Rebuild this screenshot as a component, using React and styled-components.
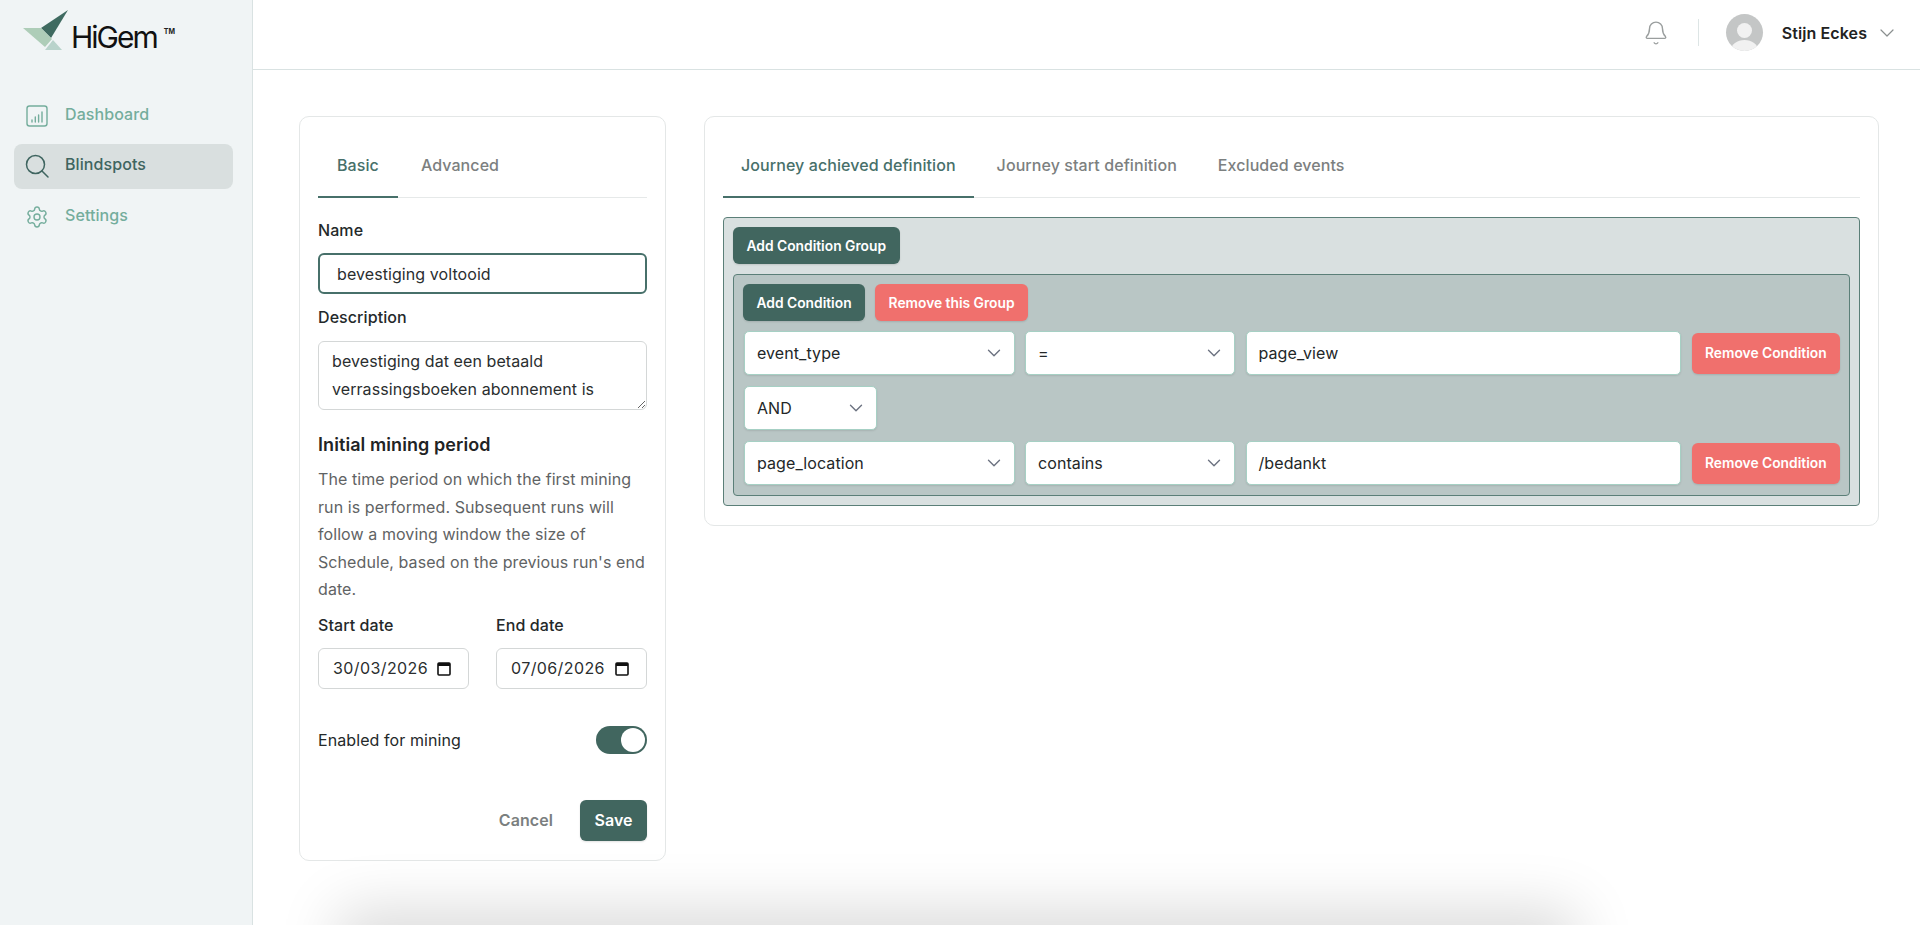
import React from "react";
import styled, { createGlobalStyle } from "styled-components";
import { ChevronDown, Bell, Settings } from "lucide-react";

const GlobalStyle = createGlobalStyle`
  html, body {
    margin: 0;
    padding: 0;
    height: 100%;
    overflow: hidden;
    background: #fff;
  }
  * {
    box-sizing: border-box;
  }
  body {
    font-family: Inter, "Liberation Sans", sans-serif;
    letter-spacing: 0.08px;
    color: #1f2425;
  }
`;

const Page = styled.div`
  display: flex;
  width: 1920px;
  height: 925px;
  overflow: hidden;
`;

// left navigation
const Sidebar = styled.aside`
  width: 253px;
  flex-shrink: 0;
  background: #f0f4f5;
  border-right: 1px solid #d9e2e2;
  padding: 10px 19px 0 14px;
`;
const Logo = styled.div`
  display: flex;
  align-items: flex-start;
  height: 83px;
  margin-left: 8px;
`;
const LogoName = styled.span`
  font-size: 30px;
  font-weight: 400;
  letter-spacing: -2px;
  line-height: 30px;
  color: #111;
  margin: 12px 0 0 1px;
`;
const LogoMark = styled.span`
  font-size: 7px;
  font-weight: 700;
  letter-spacing: 0;
  line-height: 7px;
  color: #222;
  margin: 18px 0 0 7px;
`;
const NavItem = styled.div`
  display: flex;
  align-items: center;
  gap: 16px;
  height: 45px;
  padding: 0 11px;
  margin-bottom: 5.5px;
  border-radius: 8px;
  font-size: 16px;
  font-weight: 500;
  color: ${(p) => (p.$active ? "#3f6560" : "#74ad9c")};
  background: ${(p) => (p.$active ? "#d9dfdf" : "transparent")};
  & > svg {
    flex-shrink: 0;
  }
`;
const NavLabel = styled.span`
  padding-bottom: 4px;
`;

const Main = styled.div`
  position: relative;
  flex: 1;
  min-width: 0;
  overflow: hidden;
`;
const Header = styled.header`
  height: 70px;
  display: flex;
  align-items: center;
  justify-content: flex-end;
  padding: 0 21px 4px 0;
  border-bottom: 1px solid #d9e2e2;
`;
const Divider = styled.div`
  width: 1px;
  height: 27px;
  background: #dde5e5;
  margin: 0 27px 0 29px;
`;
const Avatar = styled.div`
  position: relative;
  width: 37px;
  height: 37px;
  border-radius: 50%;
  background: #c4c6c6;
  overflow: hidden;
  &::before {
    content: "";
    position: absolute;
    left: 11px;
    top: 9px;
    width: 15px;
    height: 15px;
    border-radius: 50%;
    background: #f1f1f1;
  }
  &::after {
    content: "";
    position: absolute;
    left: 5px;
    top: 26px;
    width: 27px;
    height: 20px;
    border-radius: 50%;
    background: #f1f1f1;
  }
`;
const UserName = styled.span`
  font-size: 16px;
  font-weight: 600;
  color: #222;
  margin: 0 8px 0 19px;
`;

const Content = styled.div`
  display: flex;
  align-items: flex-start;
  gap: 38px;
  padding: 46px 42px 0 46px;
`;
const Card = styled.section`
  background: #fff;
  border: 1px solid #e4e7e7;
  border-radius: 10px;
  padding: 0 18px;
`;
const SettingsCard = styled(Card)`
  width: 367px;
  height: 745px;
  flex-shrink: 0;
`;
const DefinitionCard = styled(Card)`
  flex: 1;
  height: 410px;
`;

const Tabs = styled.div`
  display: flex;
  height: 81px;
  border-bottom: 1px solid #e6e9e9;
`;
const Tab = styled.div`
  display: flex;
  align-items: center;
  height: 81px;
  padding: 16px ${(p) => p.$pad || 18}px 0;
  font-size: 16px;
  font-weight: 500;
  white-space: nowrap;
  color: ${(p) => (p.$active ? "#47706a" : "#7c8080")};
  border-bottom: 2px solid ${(p) => (p.$active ? "#47706a" : "transparent")};
  margin-right: ${(p) => p.$gap}px;
`;

const FieldLabel = styled.div`
  font-size: 16px;
  font-weight: 500;
  line-height: 20px;
  color: #24292a;
`;
const NameLabel = styled(FieldLabel)`
  margin: 22px 0 13px;
`;
const DescriptionLabel = styled(FieldLabel)`
  margin: 13px 0 14px;
`;
const NameInput = styled.input`
  display: block;
  width: 100%;
  height: 41px;
  border: 2px solid #47706a;
  border-radius: 6px;
  outline: none;
  padding: 0 17px;
  font: 400 16px Inter, sans-serif;
  letter-spacing: 0.08px;
  color: #2a2e2f;
  background: #fff;
`;
const Description = styled.textarea`
  display: block;
  width: 100%;
  height: 69px;
  border: 1px solid #d4d7d7;
  border-radius: 6px;
  outline: none;
  padding: 6px 13px;
  font: 400 16px/27.6px Inter, sans-serif;
  letter-spacing: 0.08px;
  color: #2a2e2f;
  background: #fff;
  overflow: hidden;
`;
const SectionTitle = styled.h3`
  margin: 23px 0 9px;
  font-size: 18px;
  font-weight: 600;
  line-height: 24px;
  color: #1f2425;
`;
const Help = styled.p`
  margin: 0;
  font-size: 16px;
  line-height: 27.6px;
  color: #5f6364;
`;
const DateGrid = styled.div`
  display: grid;
  grid-template-columns: 151px 151px;
  justify-content: space-between;
  margin-top: 11px;
`;
const DateLabel = styled(FieldLabel)`
  margin-bottom: 13px;
`;
const DateBox = styled.div`
  display: flex;
  align-items: center;
  justify-content: space-between;
  height: 41px;
  padding: 0 17px 0 14px;
  border: 1px solid #d4d7d7;
  border-radius: 6px;
  font-size: 16px;
  letter-spacing: 0.4px;
  color: #2a2e2f;
`;
const ToggleRow = styled.div`
  display: flex;
  align-items: center;
  justify-content: space-between;
  height: 28px;
  margin-top: 37px;
  font-size: 16px;
  color: #24292a;
`;
const Toggle = styled.div`
  display: flex;
  align-items: center;
  justify-content: flex-end;
  width: 51px;
  height: 28px;
  padding: 2px;
  border-radius: 14px;
  background: #41665f;
  &::after {
    content: "";
    width: 24px;
    height: 24px;
    border-radius: 50%;
    background: #fff;
  }
`;
const FormActions = styled.div`
  display: flex;
  align-items: center;
  justify-content: flex-end;
  gap: 27px;
  margin-top: 46px;
`;
const CancelLink = styled.span`
  font-size: 16px;
  font-weight: 600;
  color: #7b7f80;
`;
const Button = styled.button`
  border: none;
  border-radius: 6px;
  font-family: inherit;
  font-weight: 600;
  color: #fff;
  white-space: nowrap;
  background: ${(p) => (p.$danger ? "#f0706d" : "#41665f")};
  box-shadow: 0 1px 2px rgba(0, 0, 0, 0.12);
  height: ${(p) => p.$height || 37}px;
  padding: 0 13.5px;
  font-size: 13.8px;
`;
const SaveButton = styled(Button)`
  width: 67px;
  padding: 0;
  font-size: 16px;
`;

// query builder
const TabBody = styled.div`
  padding-top: 19px;
`;
const OuterGroup = styled.div`
  border: 1px solid #5b7f78;
  border-radius: 4px;
  background: #d9e0e0;
  padding: 9px;
`;
const InnerGroup = styled.div`
  margin-top: 10px;
  border: 1px solid #5b7f78;
  border-radius: 4px;
  background: #b9c6c5;
  padding: 9px 9px 10px;
`;
const ButtonRow = styled.div`
  display: flex;
  gap: 10px;
`;
const ConditionRow = styled.div`
  display: grid;
  grid-template-columns: 270.5px 210px 435.5px 148px;
  column-gap: 10.5px;
  align-items: center;
  margin: ${(p) => p.$top}px 0 0 1px;
`;
const SelectBox = styled.div`
  display: flex;
  align-items: center;
  justify-content: space-between;
  width: ${(p) => (p.$width ? `${p.$width}px` : "auto")};
  height: 44px;
  padding: 0 9px 0 12px;
  border: 1px solid #a6d0c4;
  border-radius: 5px;
  background: #fff;
  font-size: 16px;
  color: #232728;
  box-shadow: 0 1px 2px rgba(0, 0, 0, 0.1);
`;
const AndRow = styled.div`
  margin: 11px 0 0 1px;
`;
const BottomShadow = styled.div`
  position: absolute;
  left: 100px;
  bottom: -40px;
  width: 1208px;
  height: 40px;
  box-shadow: 0 0 60px 15px rgba(0, 0, 0, 0.15);
`;

const chevron = <ChevronDown size={22} color="#6b7280" strokeWidth={1.5} />;

function Condition({ field, op, value, top }) {
  return (
    <ConditionRow $top={top}>
      <SelectBox>{field}{chevron}</SelectBox>
      <SelectBox>{op}{chevron}</SelectBox>
      <SelectBox>{value}</SelectBox>
      <Button $danger $height={41}>Remove Condition</Button>
    </ConditionRow>
  );
}

function CalendarIcon() {
  return (
    <svg width="14" height="15" viewBox="0 0 14 15" fill="none">
      <rect x="1" y="2" width="12" height="12" rx="1" stroke="#111" strokeWidth="1.6" />
      <rect x="1" y="2" width="12" height="3" fill="#111" />
    </svg>
  );
}

export default function App() {
  return (
    <Page>
      <GlobalStyle />
      <Sidebar>
        <Logo>
          <svg width="48" height="41" viewBox="0 0 48 41">
            <polygon points="46,0 19,18 29,28" fill="#3f6a60" />
            <polygon points="1,18 19,18 30,29 23,37" fill="#aecdb8" />
            <polygon points="23,40 40,40 31,30" fill="#b9d3cb" />
          </svg>
          <LogoName>HiGem</LogoName>
          <LogoMark>TM</LogoMark>
        </Logo>
        <NavItem>
          <svg width="24" height="24" viewBox="0 0 24 24" fill="none" stroke="#74ad9c" strokeWidth="1.4" strokeLinecap="round">
            <rect x="2" y="2" width="20" height="20" rx="2.5" />
            <path d="M7 18v-2M10.3 18v-5M13.6 18v-7M17 18V8" />
          </svg>
          <NavLabel>Dashboard</NavLabel>
        </NavItem>
        <NavItem $active>
          <svg width="24" height="24" viewBox="0 0 24 24" fill="none" stroke="#3f6560" strokeWidth="1.5" strokeLinecap="round">
            <circle cx="10.5" cy="10.5" r="9" />
            <path d="M17 17l6 6" />
          </svg>
          <NavLabel>Blindspots</NavLabel>
        </NavItem>
        <NavItem>
          <Settings size={24} color="#74ad9c" strokeWidth={1.4} />
          <NavLabel>Settings</NavLabel>
        </NavItem>
      </Sidebar>
      <Main>
        <Header>
          <Bell size={26} color="#9a9e9e" strokeWidth={1.3} />
          <Divider />
          <Avatar />
          <UserName>Stijn Eckes</UserName>
          <ChevronDown size={24} color="#8a8f8f" strokeWidth={1.2} />
        </Header>
        <Content>
          <SettingsCard>
            <Tabs>
              <Tab $active $pad={19} $gap={5}>Basic</Tab>
              <Tab $gap={0}>Advanced</Tab>
            </Tabs>
            <NameLabel>Name</NameLabel>
            <NameInput readOnly value="bevestiging voltooid" />
            <DescriptionLabel>Description</DescriptionLabel>
            <Description readOnly value="bevestiging dat een betaald verrassingsboeken abonnement is" />
            <SectionTitle>Initial mining period</SectionTitle>
            <Help>
              The time period on which the first mining run is performed. Subsequent runs will follow a moving window the size of Schedule, based on the previous run's end date.
            </Help>
            <DateGrid>
              <div>
                <DateLabel>Start date</DateLabel>
                <DateBox>30/03/2026<CalendarIcon /></DateBox>
              </div>
              <div>
                <DateLabel>End date</DateLabel>
                <DateBox>07/06/2026<CalendarIcon /></DateBox>
              </div>
            </DateGrid>
            <ToggleRow>
              Enabled for mining
              <Toggle />
            </ToggleRow>
            <FormActions>
              <CancelLink>Cancel</CancelLink>
              <SaveButton $height={41}>Save</SaveButton>
            </FormActions>
          </SettingsCard>
          <DefinitionCard>
            <Tabs>
              <Tab $active $gap={5}>Journey achieved definition</Tab>
              <Tab $gap={5}>Journey start definition</Tab>
              <Tab $gap={0}>Excluded events</Tab>
            </Tabs>
            <TabBody>
              <OuterGroup>
                <Button>Add Condition Group</Button>
                <InnerGroup>
                  <ButtonRow>
                    <Button>Add Condition</Button>
                    <Button $danger>Remove this Group</Button>
                  </ButtonRow>
                  <Condition top={10} field="event_type" op="=" value="page_view" />
                  <AndRow>
                    <SelectBox $width={133}>AND{chevron}</SelectBox>
                  </AndRow>
                  <Condition top={11} field="page_location" op="contains" value="/bedankt" />
                </InnerGroup>
              </OuterGroup>
            </TabBody>
          </DefinitionCard>
        </Content>
        <BottomShadow />
      </Main>
    </Page>
  );
}
